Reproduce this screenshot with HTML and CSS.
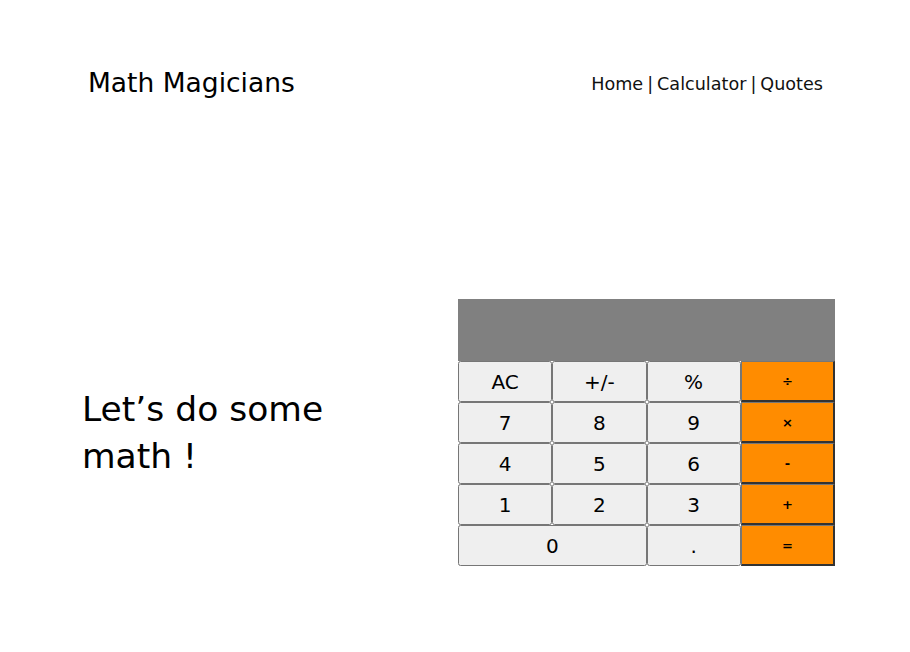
FILE: index.html
```html
<!DOCTYPE html>
<html lang="en">
<head>
<meta charset="utf-8">
<title>Math Magicians</title>
<link rel="stylesheet" href="styles.css">
</head>
<body>
<header class="header">
  <h1 class="logo">Math Magicians</h1>
  <nav class="nav">
    <a href="#" class="nav-link">Home</a>
    <span class="sep">|</span>
    <a href="#" class="nav-link">Calculator</a>
    <span class="sep">|</span>
    <a href="#" class="nav-link">Quotes</a>
  </nav>
</header>
<main class="main">
  <h2 class="intro">Let’s do some math !</h2>
  <div class="calculator">
    <div class="display"></div>
    <div class="keys">
      <button class="key">AC</button>
      <button class="key">+/-</button>
      <button class="key">%</button>
      <button class="key op">÷</button>
      <button class="key">7</button>
      <button class="key">8</button>
      <button class="key">9</button>
      <button class="key op">×</button>
      <button class="key">4</button>
      <button class="key">5</button>
      <button class="key">6</button>
      <button class="key op">-</button>
      <button class="key">1</button>
      <button class="key">2</button>
      <button class="key">3</button>
      <button class="key op">+</button>
      <button class="key zero">0</button>
      <button class="key">.</button>
      <button class="key op">=</button>
    </div>
  </div>
</main>
</body>
</html>
```

FILE: styles.css
```css
html, body {
  margin: 0;
  padding: 0;
  background: #fff;
}

body {
  font-family: "DejaVu Sans", "Open Sans", sans-serif;
  color: #000;
}

.header {
  display: flex;
  justify-content: space-between;
  align-items: center;
  padding: 66px 87px 0 88px;
}

.logo {
  margin: 0;
  font-size: 26.5px;
  font-weight: normal;
  line-height: 34px;
}

.nav {
  display: flex;
  align-items: center;
  gap: 4px;
  font-size: 17.6px;
  margin-top: 1px;
}

.nav-link {
  color: #111;
  text-decoration: none;
}

.sep {
  color: #111;
}

.main {
  display: flex;
  align-items: center;
  justify-content: space-between;
  padding: 0 75px 0 82px;
  margin-top: 199px;
}

.intro {
  margin: 0;
  width: 290px;
  font-size: 34.5px;
  font-weight: normal;
  line-height: 47px;
}

.calculator {
  width: 377px;
}

.display {
  height: 62px;
  background: #808080;
}

.keys {
  display: grid;
  grid-template-columns: repeat(4, 1fr);
  grid-auto-rows: 41px;
}

.key {
  font-family: "DejaVu Sans", "Open Sans", sans-serif;
  font-size: 20px;
  color: #000;
  margin: 0;
}

.zero {
  grid-column: span 2;
}

.op {
  background: #ff8c00;
  font-size: 13px;
  font-weight: bold;
  border-style: solid;
  border-width: 1px 2px 2px 1px;
  border-color: #777 #333 #333 #777;
}
```
